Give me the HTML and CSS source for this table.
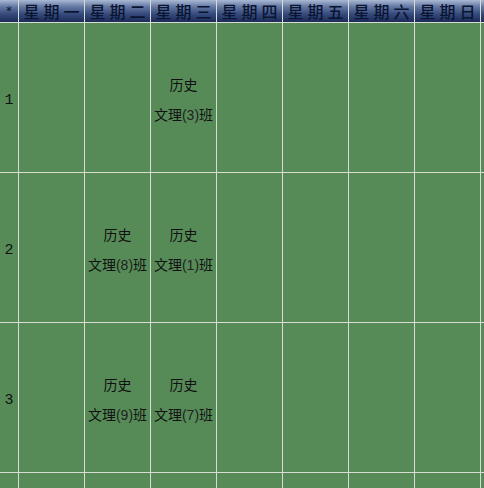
FILE: index.html
```html
<!DOCTYPE html>
<html>
<head>
<meta charset="utf-8">
<link rel="stylesheet" href="styles.css">
</head>
<body>
<div class="grid">
  <div class="hd star">*</div>
  <div class="hd">星期一</div>
  <div class="hd">星期二</div>
  <div class="hd">星期三</div>
  <div class="hd">星期四</div>
  <div class="hd">星期五</div>
  <div class="hd">星期六</div>
  <div class="hd">星期日</div>
  <div class="hd"></div>

  <div class="num">1</div>
  <div class="cell"></div>
  <div class="cell"></div>
  <div class="cell"><span>历史</span><span>文理<i>(3)</i>班</span></div>
  <div class="cell"></div>
  <div class="cell"></div>
  <div class="cell"></div>
  <div class="cell"></div>
  <div class="cell"></div>

  <div class="num">2</div>
  <div class="cell"></div>
  <div class="cell"><span>历史</span><span>文理<i>(8)</i>班</span></div>
  <div class="cell"><span>历史</span><span>文理<i>(1)</i>班</span></div>
  <div class="cell"></div>
  <div class="cell"></div>
  <div class="cell"></div>
  <div class="cell"></div>
  <div class="cell"></div>

  <div class="num">3</div>
  <div class="cell"></div>
  <div class="cell"><span>历史</span><span>文理<i>(9)</i>班</span></div>
  <div class="cell"><span>历史</span><span>文理<i>(7)</i>班</span></div>
  <div class="cell"></div>
  <div class="cell"></div>
  <div class="cell"></div>
  <div class="cell"></div>
  <div class="cell"></div>

  <div class="num"></div>
  <div class="cell"></div>
  <div class="cell"></div>
  <div class="cell"></div>
  <div class="cell"></div>
  <div class="cell"></div>
  <div class="cell"></div>
  <div class="cell"></div>
  <div class="cell"></div>
</div>
</body>
</html>
```
FILE: styles.css
```css
html, body {
  margin: 0;
  padding: 0;
  background: #568b58;
  overflow: hidden;
}
.grid {
  width: 484px;
  height: 488px;
  overflow: hidden;
  display: grid;
  grid-template-columns: 18px repeat(7, 65px) 1fr;
  grid-template-rows: 22px repeat(4, 149px);
  gap: 1px;
  background: #d9dcd2;
}
.hd {
  background: linear-gradient(to bottom, #a9b8d4 0%, #6579a3 30%, #34497a 65%, #1c2b58 100%);
  color: #0a1433;
  font-family: "Noto Sans CJK SC", sans-serif;
  font-size: 16px;
  font-weight: 500;
  line-height: 22px;
  letter-spacing: 4px;
  padding-left: 4px;
  text-align: center;
  white-space: nowrap;
}
.hd.star {
  letter-spacing: 0;
  padding-left: 0;
  font-family: "DejaVu Sans", sans-serif;
  font-size: 12px;
  font-weight: normal;
  color: #0c1838;
}
.num {
  background: #568b58;
  font-family: "Liberation Mono", monospace;
  font-size: 15px;
  color: #111;
  display: flex;
  align-items: center;
  justify-content: center;
  padding-top: 6px;
  box-sizing: border-box;
}
.cell {
  background: #568b58;
  display: flex;
  flex-direction: column;
  align-items: center;
  justify-content: center;
  padding-top: 4px;
  box-sizing: border-box;
  font-family: "Noto Sans CJK SC", sans-serif;
  font-size: 14px;
  color: #111;
}
.cell span {
  line-height: 30px;
  white-space: nowrap;
}
.cell i {
  font-style: normal;
  font-family: "Liberation Sans", sans-serif;
  font-size: 14px;
  color: #222;
}
```
